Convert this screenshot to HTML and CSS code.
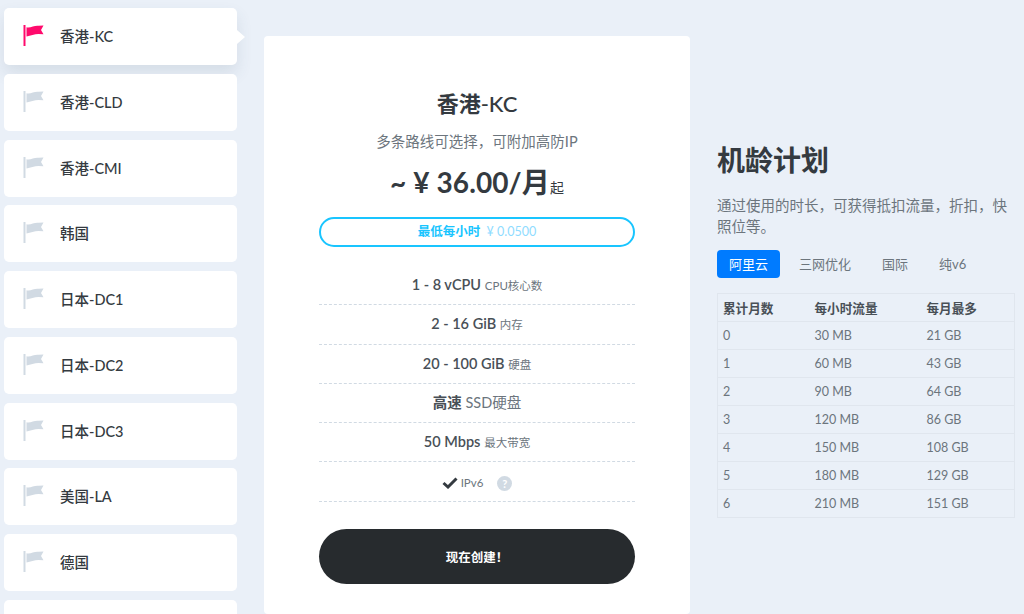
FILE: index.html
```html
<!DOCTYPE html>
<html lang="zh">
<head>
<meta charset="utf-8">
<title>机龄计划</title>
<link rel="stylesheet" href="styles.css">
</head>
<body>
<svg class="defs" width="0" height="0" aria-hidden="true"><symbol id="flag" viewBox="0 0 20 21"><path d="M0 0h2v21H0z"/><path d="M3 2.2 C7 3.2 11 0.2 15 0.8 L20 0.5 L17.5 5 L20 9.2 L15 9 C11 9 7 10.5 3 11.5z"/></symbol></svg>
<div class="page">
  <nav class="side">
    <a class="loc active"><svg class="flag"><use href="#flag"/></svg><span>香港-KC</span></a>
    <a class="loc"><svg class="flag"><use href="#flag"/></svg><span>香港-CLD</span></a>
    <a class="loc"><svg class="flag"><use href="#flag"/></svg><span>香港-CMI</span></a>
    <a class="loc"><svg class="flag"><use href="#flag"/></svg><span>韩国</span></a>
    <a class="loc"><svg class="flag"><use href="#flag"/></svg><span>日本-DC1</span></a>
    <a class="loc"><svg class="flag"><use href="#flag"/></svg><span>日本-DC2</span></a>
    <a class="loc"><svg class="flag"><use href="#flag"/></svg><span>日本-DC3</span></a>
    <a class="loc"><svg class="flag"><use href="#flag"/></svg><span>美国-LA</span></a>
    <a class="loc"><svg class="flag"><use href="#flag"/></svg><span>德国</span></a>
    <a class="loc"></a>
  </nav>
  <main class="plan">
    <h2 class="plan-title">香港<span class="lat">-KC</span></h2>
    <p class="plan-sub">多条路线可选择，可附加高防IP</p>
    <div class="price">~ ¥ 36.00/月<small>起</small></div>
    <div class="hourly"><b>最低每小时</b> <span>¥ 0.0500</span></div>
    <ul class="specs">
      <li><b>1 - 8 vCPU</b> <small>CPU核心数</small></li>
      <li><b>2 - 16 GiB</b> <small>内存</small></li>
      <li><b>20 - 100 GiB</b> <small>硬盘</small></li>
      <li><b>高速</b> <span class="ssd">SSD硬盘</span></li>
      <li><b>50 Mbps</b> <small>最大带宽</small></li>
      <li class="ipv6"><svg class="check" viewBox="0 0 16 12"><path d="M1.5 6 L6 10 L14.5 1.5" fill="none" stroke="#343a40" stroke-width="3"/></svg><small>IPv6</small><i class="help">?</i></li>
    </ul>
    <button class="create">现在创建！</button>
  </main>
  <aside class="info">
    <h1>机龄计划</h1>
    <p>通过使用的时长，可获得抵扣流量，折扣，快照位等。</p>
    <div class="tabs">
      <span class="tab on">阿里云</span><span class="tab">三网优化</span><span class="tab">国际</span><span class="tab">纯v6</span>
    </div>
    <table>
      <thead><tr><th>累计月数</th><th>每小时流量</th><th>每月最多</th></tr></thead>
      <tbody>
        <tr><td>0</td><td>30 MB</td><td>21 GB</td></tr>
        <tr><td>1</td><td>60 MB</td><td>43 GB</td></tr>
        <tr><td>2</td><td>90 MB</td><td>64 GB</td></tr>
        <tr><td>3</td><td>120 MB</td><td>86 GB</td></tr>
        <tr><td>4</td><td>150 MB</td><td>108 GB</td></tr>
        <tr><td>5</td><td>180 MB</td><td>129 GB</td></tr>
        <tr><td>6</td><td>210 MB</td><td>151 GB</td></tr>
      </tbody>
    </table>
  </aside>
</div>
</body>
</html>
```
FILE: styles.css
```css
* { box-sizing: border-box; }
html, body { margin: 0; height: 100%; overflow: hidden; }
body { background: #eaf0f8; color: #343a40; font-family: "Lato", "Noto Sans CJK SC", sans-serif; font-size: 14px; }
.defs { position: absolute; }
.page { display: flex; height: 614px; overflow: hidden; }
.side { width: 264px; flex: none; padding: 8px 27px 0 4px; display: flex; flex-direction: column; gap: 8.75px; }
.loc { flex: none; height: 57px; display: flex; align-items: center; gap: 16px; padding-left: 19px; background: #fff; border-radius: 5px; color: #343a40; font-size: 14.5px; font-weight: 500; position: relative; }
.loc span { padding-bottom: 2px; }
.loc.active { box-shadow: 0 8px 16px rgba(60, 80, 110, .12); }
.loc.active::after { content: ""; position: absolute; right: -8px; top: 22px; border-left: 8px solid #fff; border-top: 7px solid transparent; border-bottom: 7px solid transparent; }
.flag { width: 21px; height: 21px; fill: #d1dae3; margin-top: -2px; }
.active .flag { fill: #ff0a6c; }
.plan { width: 426px; flex: none; margin-top: 36px; padding: 53px 55px 0; background: #fff; border-radius: 4px; text-align: center; }
.plan-title { margin: 0; font-size: 22px; line-height: 30px; font-weight: 700; color: #343a40; }
.plan-title .lat { font-weight: 500; }
.plan-sub { margin: 12px 0 0; font-size: 14.5px; line-height: 22px; color: #6c757d; }
.price { margin-top: 9px; font-size: 28px; line-height: 40px; font-weight: 700; color: #343a40; letter-spacing: .1px; }
.price small { font-size: 14px; font-weight: 400; }
.hourly { margin-top: 9px; height: 30px; line-height: 26px; border: 2px solid #19c5ff; border-radius: 15px; font-size: 12.5px; color: #19c5ff; }
.hourly b { font-weight: 700; margin-right: 3px; }
.hourly span { color: #8fdcff; }
.specs { list-style: none; margin: 19px 0 0; padding: 0; }
.specs li { height: 39.3px; line-height: 38px; border-bottom: 1px dashed #d1dae3; font-size: 14.5px; color: #495057; }
.specs b { font-weight: 600; }
.specs small { font-size: 11.5px; color: #6c757d; }
.specs .ssd { color: #6c757d; }
.specs .ipv6 { display: flex; align-items: center; justify-content: center; padding-top: 3px; }
.check { width: 16px; height: 12px; margin-right: 3px; }
.help { width: 15px; height: 15px; margin-left: 14px; border-radius: 50%; background: #d1dae3; color: #fff; font-size: 11px; line-height: 15px; font-style: normal; font-weight: 700; }
.create { display: block; width: 100%; height: 55px; margin-top: 27px; border: 0; border-radius: 28px; background: #272b2e; color: #fff; font: 700 12.5px "Lato", "Noto Sans CJK SC", sans-serif; }
.info { width: 298px; flex: none; margin-left: 27px; padding-top: 139px; }
.info h1 { margin: 0; font-size: 28px; line-height: 42px; font-weight: 700; color: #343a40; }
.info p { margin: 14px 0 0; font-size: 14.5px; line-height: 21px; color: #6c757d; }
.tabs { display: flex; gap: 5px; margin-top: 13px; }
.tab { height: 28px; line-height: 28px; padding: 0 13px; font-size: 13px; color: #6c757d; border-radius: 4px; }
.tab.on { width: 63px; padding: 0; margin-right: 1px; text-align: center; background: #007bff; color: #fff; }
table { width: 298px; margin-top: 15px; border-collapse: collapse; table-layout: fixed; font-size: 12.5px; color: #6c757d; }
th, td { height: 28px; padding: 0 5px; text-align: left; border: 1px solid #e0e6ee; border-width: 1px 0; }
td { padding-bottom: 1px; }
th { font-size: 12.6px; font-weight: 700; color: #495057; }
th:first-child, td:first-child { width: 92px; border-left-width: 1px; }
th:nth-child(2), td:nth-child(2) { width: 112px; }
th:last-child, td:last-child { border-right-width: 1px; }
```
